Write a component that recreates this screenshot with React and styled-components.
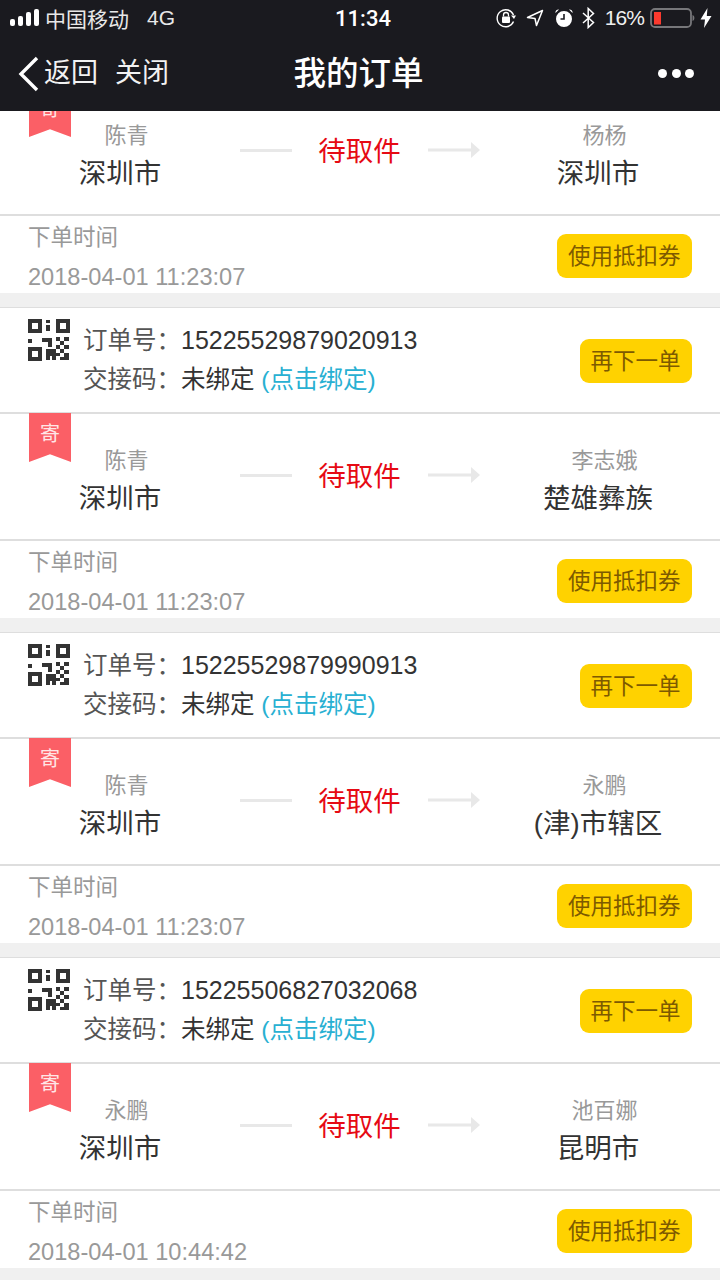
import React from "react";
import styled, { createGlobalStyle } from "styled-components";

const GlobalStyle = createGlobalStyle`
  html, body {
    margin: 0;
    padding: 0;
    background: #f0f0f0;
  }
  body {
    font-family: "Liberation Sans", "Noto Sans CJK SC", sans-serif;
  }
`;

const Page = styled.div`
  width: 720px;
  height: 1280px;
  overflow: hidden;
  display: flex;
  flex-direction: column;
`;

const TopBar = styled.header`
  height: 111px;
  flex: none;
  background: #1a1a1f;
  color: #fff;
`;

const StatusBar = styled.div`
  height: 36px;
  display: flex;
  align-items: center;
  padding: 0 8px 0 10px;
  font-size: 21px;
  position: relative;
`;

const Carrier = styled.span`
  margin-left: 6px;
  color: #e8e8e8;
`;

const Network = styled.span`
  margin-left: 18px;
  color: #e8e8e8;
`;

const Clock = styled.span`
  position: absolute;
  left: 6px;
  right: 0;
  text-align: center;
  font-family: Roboto, sans-serif;
  font-size: 22px;
  font-weight: 500;
`;

const StatusRight = styled.div`
  margin-left: auto;
  display: flex;
  align-items: center;
  gap: 10px;
`;

const Percent = styled.span`
  margin: 0 -4px 0 0;
  letter-spacing: -0.9px;
  color: #f0f0f0;
`;

const Nudge = styled.span`
  display: flex;
  margin-left: ${(p) => p.$left}px;
`;

const NavBar = styled.div`
  height: 75px;
  display: flex;
  align-items: center;
  padding: 0 26px 0 18px;
  position: relative;
`;

const NavText = styled.span`
  font-size: 27px;
  line-height: 1;
  margin-left: ${(p) => p.$gap}px;
  color: #f2f2f2;
`;

const NavTitle = styled.div`
  position: absolute;
  left: 0;
  right: 3px;
  top: 18px;
  text-align: center;
  font-size: 32.5px;
  line-height: 40px;
  font-weight: 500;
`;

const MoreDots = styled.div`
  margin-left: auto;
  display: flex;
  gap: 4.5px;
`;

const Dot = styled.i`
  width: 9px;
  height: 9px;
  border-radius: 50%;
  background: #fff;
`;

const List = styled.main`
  flex: 1;
  overflow: hidden;
`;

const Order = styled.section`
  margin-top: ${(p) => p.$top}px;
  margin-bottom: 14px;
  background: #fff;
  border-top: 1px solid #dedede;
`;

const OrderHead = styled.div`
  height: 106px;
  box-sizing: border-box;
  padding: 11px 28px 0;
  display: flex;
  border-bottom: 2px solid #dedede;
`;

const QrWrap = styled.div`
  width: 42px;
  height: 42px;
  flex: none;
`;

const HeadInfo = styled.div`
  margin: 2px 0 0 13px;
  font-size: 24.5px;
  line-height: 39px;
  color: #333;
  flex: 1;
`;

const InfoLabel = styled.span`
  color: #555;
`;

const OrderNo = styled.span`
  font-size: 25px;
`;

const BindLink = styled.span`
  color: #28b0d2;
`;

const Button = styled.div`
  height: 44px;
  padding: 0 11.5px 0 10.5px;
  border-radius: 9px;
  background: #ffd200;
  color: #7d5a00;
  font-size: 22.5px;
  line-height: 46px;
  flex: none;
  white-space: nowrap;
`;

const HeadButton = styled(Button)`
  margin-top: 20px;
`;

const Route = styled.div`
  height: 127px;
  box-sizing: border-box;
  padding-bottom: 3px;
  position: relative;
  display: flex;
  align-items: center;
  border-bottom: 2px solid #dedede;
`;

const Ribbon = styled.div`
  position: absolute;
  left: 29px;
  top: -1px;
  width: 42px;
  height: 49px;
  background: #fb5f66;
  color: #ffe6e6;
  font-size: 20px;
  line-height: 42px;
  text-align: center;
  clip-path: polygon(0 0, 100% 0, 100% 100%, 50% 84%, 0 100%);
`;

const Place = styled.div`
  width: 160px;
  margin-left: ${(p) => p.$left}px;
  flex: none;
  text-align: center;
  padding-top: 15px;
`;

const Person = styled.div`
  font-size: 22px;
  line-height: 30px;
  padding-left: 13px;
  margin-bottom: 3px;
  color: #999;
`;

const City = styled.div`
  font-size: 27.5px;
  line-height: 40px;
  color: #333;
`;

const Line = styled.div`
  width: 52px;
  height: 3px;
  background: #e8e8e8;
  flex: none;
  margin-left: 40px;
`;

const Arrow = styled.svg`
  width: 52px;
  height: 16px;
  flex: none;
  display: block;
`;

const Status = styled.div`
  width: 136px;
  box-sizing: border-box;
  padding-right: 1px;
  margin-bottom: 2px;
  flex: none;
  text-align: center;
  font-size: 27.5px;
  color: #e60a14;
`;

const TimeRow = styled.div`
  height: 77px;
  box-sizing: border-box;
  padding: 0 28px;
  display: flex;
  justify-content: space-between;
`;

const TimeLabel = styled.div`
  font-size: 22.5px;
  line-height: 28px;
  margin-top: 8px;
  color: #999;
`;

const TimeValue = styled.div`
  font-size: 23.6px;
  line-height: 28px;
  margin-top: 11px;
  color: #999;
`;

const TimeButton = styled(Button)`
  margin-top: 18px;
`;

const qrBlocks = [
  [18, 1, 4, 3], [18, 6, 4, 6],
  [0, 20, 4, 4], [14, 19, 10, 4], [20, 23, 4, 5],
  [28, 18, 4, 4], [36, 18, 5, 4], [32, 22, 4, 4], [28, 26, 4, 4], [36, 26, 5, 4],
  [32, 30, 4, 4], [18, 30, 10, 4], [18, 34, 4, 7], [22, 34, 6, 3],
  [24, 37, 4, 4], [28, 34, 4, 3], [36, 34, 5, 7], [32, 38, 4, 3],
];

const Finder = ({ x, y }) => (
  <path d={`M${x} ${y}h14v14h-14z M${x + 4} ${y + 4}v6h6v-6z`} fillRule="evenodd" />
);

const QrIcon = () => (
  <svg width="42" height="42" viewBox="0 0 42 42" fill="#333">
    <Finder x={0} y={0} />
    <Finder x={28} y={0} />
    <Finder x={0} y={28} />
    {qrBlocks.map(([x, y, w, h]) => (
      <rect key={`${x}-${y}`} x={x} y={y} width={w} height={h} />
    ))}
  </svg>
);

const Signal = () => (
  <svg width="29" height="18" viewBox="0 0 29 18" fill="#fff">
    <rect x="0" y="10" width="5" height="7" rx="2" />
    <rect x="8" y="7" width="5" height="10" rx="2" />
    <rect x="16" y="3" width="5" height="14" rx="2" />
    <rect x="24" y="0" width="5" height="17" rx="2" />
  </svg>
);

const BackIcon = () => (
  <svg width="22" height="36" viewBox="0 0 22 36" fill="none" stroke="#fff" strokeWidth="3.4">
    <path d="M19 2 L3 18 L19 34" />
  </svg>
);

const RotationLock = () => (
  <svg width="20" height="20" viewBox="0 0 20 20" fill="none" stroke="#fff">
    <path d="M17.5 13.5 A8.5 8.5 0 1 1 17.5 7" strokeWidth="1.4" />
    <path d="M15 7.5 L20 7.5 L18 11 Z" fill="#fff" stroke="none" />
    <rect x="6" y="8.5" width="8" height="6.5" rx="1" fill="#fff" stroke="none" />
    <path d="M7.5 8.5 V7 a2.5 2.5 0 0 1 5 0 V8.5" strokeWidth="1.3" />
  </svg>
);

const Location = () => (
  <svg width="18" height="18" viewBox="0 0 18 18" fill="none" stroke="#fff" strokeWidth="1.5">
    <path d="M16.5 1.5 L1.5 8.5 L9 9.5 L10.5 16.5 Z" strokeLinejoin="round" />
  </svg>
);

const Alarm = () => (
  <svg width="18" height="20" viewBox="0 0 18 20" fill="#fff">
    <path d="M0.5 5 L4 1.5 A3 3 0 0 0 0.5 5 Z M17.5 5 L14 1.5 A3 3 0 0 1 17.5 5 Z" />
    <path d="M9 3 A8 8 0 1 0 9 19 A8 8 0 1 0 9 3 Z M8.2 6 H9.8 V11.8 H5.5 V10.2 H8.2 Z" fillRule="evenodd" />
  </svg>
);

const Bluetooth = () => (
  <svg width="13" height="22" viewBox="0 0 13 22" fill="none" stroke="#fff" strokeWidth="1.5">
    <path d="M1 6 L11.5 15.5 L6.2 20.5 V1.5 L11.5 6.5 L1 16" />
  </svg>
);

const Battery = () => (
  <svg width="45" height="20" viewBox="0 0 45 20">
    <rect x="1" y="1" width="40" height="18" rx="4" fill="none" stroke="#77777a" strokeWidth="1.8" />
    <rect x="4" y="4" width="7" height="12.5" fill="#fb3a2e" />
    <path d="M42.5 7 C45 7.5 45 12.5 42.5 13 Z" fill="#77777a" />
  </svg>
);

const Bolt = () => (
  <svg width="12" height="20" viewBox="0 0 12 20" fill="#fff">
    <path d="M7.5 0 L0.5 11.5 H5 L4 20 L11.5 8 H6.8 Z" />
  </svg>
);

const orders = [
  { top: -129, no: "15225529879020913", from: "陈青", fromCity: "深圳市", to: "杨杨", toCity: "深圳市", time: "2018-04-01 11:23:07" },
  { top: 0, no: "15225529879020913", from: "陈青", fromCity: "深圳市", to: "李志娥", toCity: "楚雄彝族", time: "2018-04-01 11:23:07" },
  { top: 0, no: "15225529879990913", from: "陈青", fromCity: "深圳市", to: "永鹏", toCity: "(津)市辖区", time: "2018-04-01 11:23:07" },
  { top: 0, no: "15225506827032068", from: "永鹏", fromCity: "深圳市", to: "池百娜", toCity: "昆明市", time: "2018-04-01 10:44:42" },
];

const App = () => {
  return (
    <Page>
      <GlobalStyle />
      <TopBar>
        <StatusBar>
          <Signal />
          <Carrier>中国移动</Carrier>
          <Network>4G</Network>
          <Clock>11:34</Clock>
          <StatusRight>
            <RotationLock />
            <Location />
            <Nudge $left={1}>
              <Alarm />
            </Nudge>
            <Nudge $left={-1}>
              <Bluetooth />
            </Nudge>
            <Percent>16%</Percent>
            <Battery />
            <Nudge $left={-5}>
              <Bolt />
            </Nudge>
          </StatusRight>
        </StatusBar>
        <NavBar>
          <BackIcon />
          <NavText $gap={4}>返回</NavText>
          <NavText $gap={17}>关闭</NavText>
          <NavTitle>我的订单</NavTitle>
          <MoreDots>
            <Dot />
            <Dot />
            <Dot />
          </MoreDots>
        </NavBar>
      </TopBar>
      <List>
        {orders.map((order, i) => (
          <Order key={i} $top={order.top}>
            <OrderHead>
              <QrWrap>
                <QrIcon />
              </QrWrap>
              <HeadInfo>
                <div>
                  <InfoLabel>订单号：</InfoLabel>
                  <OrderNo>{order.no}</OrderNo>
                </div>
                <div>
                  <InfoLabel>交接码：</InfoLabel>
                  未绑定 <BindLink>(点击绑定)</BindLink>
                </div>
              </HeadInfo>
              <HeadButton>再下一单</HeadButton>
            </OrderHead>
            <Route>
              <Ribbon>寄</Ribbon>
              <Place $left={40}>
                <Person>{order.from}</Person>
                <City>{order.fromCity}</City>
              </Place>
              <Line />
              <Status>待取件</Status>
              <Arrow viewBox="0 0 52 16">
                <rect x="0" y="6.5" width="44" height="3" fill="#e8e8e8" />
                <path d="M43 0 L52 8 L43 16 Z" fill="#e8e8e8" />
              </Arrow>
              <Place $left={38}>
                <Person>{order.to}</Person>
                <City>{order.toCity}</City>
              </Place>
            </Route>
            <TimeRow>
              <div>
                <TimeLabel>下单时间</TimeLabel>
                <TimeValue>{order.time}</TimeValue>
              </div>
              <TimeButton>使用抵扣券</TimeButton>
            </TimeRow>
          </Order>
        ))}
      </List>
    </Page>
  );
};

export default App;
